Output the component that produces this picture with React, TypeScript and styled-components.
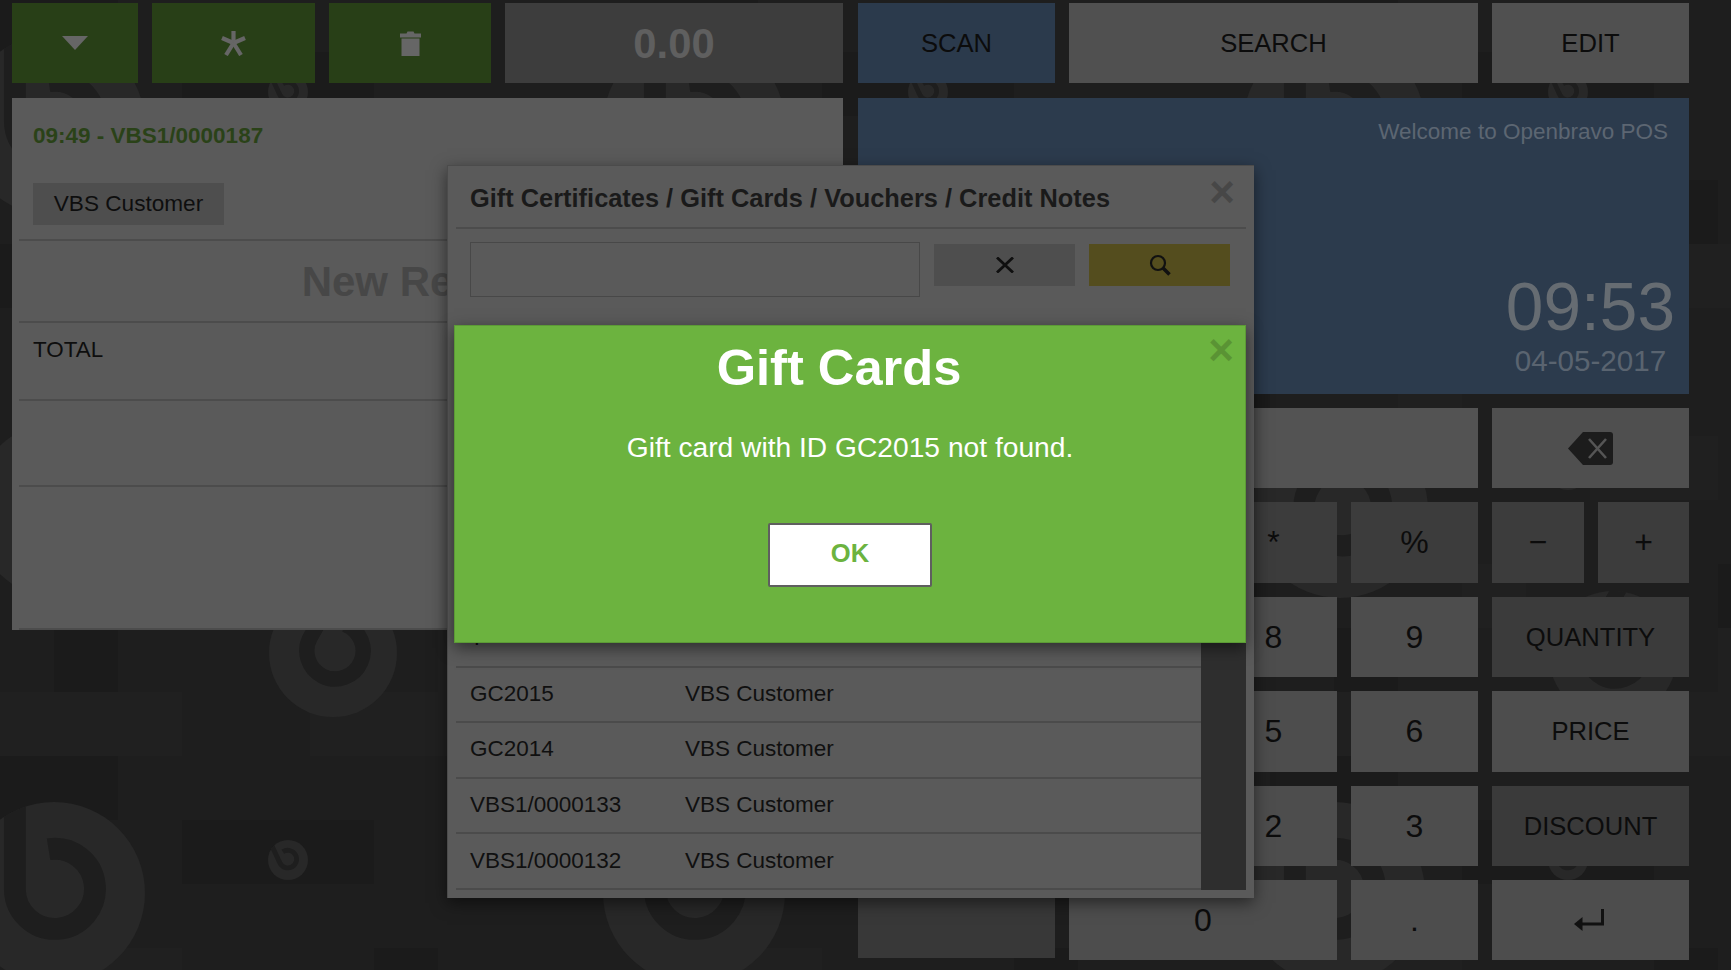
import React from 'react';
import styled, { createGlobalStyle } from 'styled-components';

const GlobalStyle = createGlobalStyle`
  html, body {
    margin: 0;
    padding: 0;
    background: #1e1e1e;
    font-family: "Liberation Sans", Arial, sans-serif;
    overflow: hidden;
  }
`;

const Screen = styled.div`
  position: relative;
  width: 1731px;
  height: 970px;
  overflow: hidden;
`;

const BackdropSvg = styled.svg`
  position: absolute;
  left: 0;
  top: 0;
`;

const Main = styled.div`
  position: relative;
  display: grid;
  grid-template-columns: 831px 831px;
  column-gap: 15px;
  padding: 3px 0 0 12px;
`;

const Column = styled.div`
  display: flex;
  flex-direction: column;
`;

const TopRow = styled.div`
  display: flex;
  gap: 14px;
  height: 80px;
  margin-bottom: 15px;
`;

const TopButton = styled.div<{ $width: number; $bg: string }>`
  width: ${(p) => p.$width}px;
  background: ${(p) => p.$bg};
  display: flex;
  align-items: center;
  justify-content: center;
  color: #0c0c0c;
  font-size: 25.6px;
`;

const Amount = styled(TopButton)`
  box-sizing: border-box;
  padding-top: 2px;
  color: #5f5f5f;
  font-size: 41.8px;
  font-weight: bold;
`;

const ReceiptPanel = styled.div`
  height: 532px;
  background: #5a5a5a;
  padding-left: 7px;
  box-sizing: border-box;
  display: flex;
  flex-direction: column;
`;

const ReceiptTitle = styled.div`
  padding: 25px 0 0 14px;
  height: 62px;
  box-sizing: border-box;
  color: #2a4218;
  font-size: 22.5px;
  font-weight: bold;
  line-height: 26px;
`;

const CustomerRow = styled.div`
  height: 81px;
  padding: 23px 0 0 14px;
  box-sizing: border-box;
  border-bottom: 2px solid #4c4c4c;
`;

const CustomerButton = styled.div`
  display: inline-flex;
  align-items: center;
  justify-content: center;
  width: 191px;
  height: 42px;
  background: #4e4e4e;
  color: #0e0e0e;
  font-size: 22.6px;
`;

const EmptyLabel = styled.div`
  height: 82px;
  box-sizing: border-box;
  border-bottom: 2px solid #4c4c4c;
  display: flex;
  align-items: center;
  justify-content: center;
  padding: 2px 9px 0 0;
  color: #474747;
  font-size: 42px;
  font-weight: bold;
`;

const ReceiptLine = styled.div<{ $height: number }>`
  height: ${(p) => p.$height}px;
  box-sizing: border-box;
  border-bottom: 2px solid #4c4c4c;
  padding: 14px 0 0 14px;
  color: #0e0e0e;
  font-size: 22.4px;
  line-height: 26px;
`;

const ReceiptFoot = styled.div`
  flex: 1;
  border-bottom: 2px solid #4c4c4c;
`;

const InfoPanel = styled.div`
  height: 296px;
  margin-bottom: 14px;
  background: #2c3b4d;
  box-sizing: border-box;
  padding: 22px 21px 0 0;
  display: flex;
  flex-direction: column;
  align-items: flex-end;
`;

const Welcome = styled.div`
  color: #5c6672;
  font-size: 22.5px;
  line-height: 24px;
`;

const ClockBox = styled.div`
  margin-top: 130px;
  margin-right: -7px;
  display: flex;
  flex-direction: column;
  align-items: center;
`;

const Clock = styled.div`
  color: #666c72;
  font-size: 67.6px;
  line-height: 66px;
`;

const DateLabel = styled.div`
  margin-top: 4px;
  color: #5a6470;
  font-size: 29.6px;
  line-height: 34px;
`;

const Keypad = styled.div`
  display: grid;
  grid-template-columns: 197px 127px 127px 127px 197px;
  grid-template-rows: 80px 81px 80px 81px 80px 80px;
  gap: 14px;
`;

const Key = styled.div<{ $bg?: string; $span?: number; $big?: boolean }>`
  grid-column: span ${(p) => p.$span ?? 1};
  background: ${(p) => p.$bg ?? '#4d4d4d'};
  display: flex;
  align-items: center;
  justify-content: center;
  color: #0c0c0c;
  font-size: ${(p) => (p.$big ? 32 : 25.6)}px;
`;

const SplitKey = styled.div`
  display: flex;
  gap: 14px;
`;

const HalfKey = styled(Key)<{ $width: number }>`
  width: ${(p) => p.$width}px;
  flex: none;
`;

const BottomBlank = styled(Key)`
  margin-bottom: 2px;
`;

const EnterKey = styled(Key)`
  padding-right: 4px;
`;

const Dialog = styled.div`
  position: absolute;
  left: 447px;
  top: 165px;
  width: 807px;
  height: 733px;
  box-sizing: border-box;
  padding: 0 8px;
  background: #5a5a5a;
  border-top: 1px solid #4b4b4b;
  border-left: 1px solid #4b4b4b;
  box-shadow: 0 5px 15px rgba(0, 0, 0, 0.5);
  display: flex;
  flex-direction: column;
`;

const DialogHeader = styled.div`
  height: 63px;
  box-sizing: border-box;
  border-bottom: 2px solid #4c4c4c;
  padding: 17px 0 0 14px;
  color: #1a1a1a;
  font-size: 25.4px;
  font-weight: bold;
  line-height: 30px;
`;

const CloseMark = styled.div<{ $color: string; $top: number; $right: number }>`
  position: absolute;
  right: ${(p) => p.$right}px;
  top: ${(p) => p.$top}px;
  color: ${(p) => p.$color};
  font-size: 44px;
  font-weight: bold;
  line-height: 36px;
`;

const SearchRow = styled.div`
  display: flex;
  align-items: flex-start;
  padding: 13px 0 0 14px;
  height: 316px;
  box-sizing: border-box;
`;

const SearchInput = styled.div`
  width: 450px;
  height: 55px;
  box-sizing: border-box;
  border: 1px solid #484848;
  margin-right: 14px;
`;

const SearchButton = styled.div<{ $bg: string }>`
  width: 141px;
  height: 42px;
  margin: 2px 14px 0 0;
  background: ${(p) => p.$bg};
  display: flex;
  align-items: center;
  justify-content: center;
`;

const ListArea = styled.div`
  display: flex;
  height: 278px;
  margin-top: 67px;
`;

const CardList = styled.div`
  flex: 1;
`;

const CardRow = styled.div<{ $height: number }>`
  height: ${(p) => p.$height}px;
  box-sizing: border-box;
  border-bottom: 2px solid #4b4b4b;
  display: flex;
  align-items: center;
  padding: 0 0 2px 14px;
  color: #101010;
  font-size: 22.5px;

  &:last-child {
    padding-bottom: 0;
  }
`;

const CardId = styled.div`
  width: 215px;
`;

const ScrollTrack = styled.div`
  width: 45px;
  margin-top: -62px;
  background: #2e2e2e;
`;

const Alert = styled.div`
  position: absolute;
  left: 454px;
  top: 325px;
  width: 792px;
  height: 318px;
  box-sizing: border-box;
  background: #6cb33f;
  border: 1px solid #5c9a36;
  box-shadow: 0 5px 15px rgba(0, 0, 0, 0.5);
  display: flex;
  flex-direction: column;
  align-items: center;
  color: #fff;
`;

const AlertTitle = styled.div`
  margin: 15px 0 0 -22px;
  font-size: 50.6px;
  font-weight: bold;
  line-height: 54px;
`;

const AlertBody = styled.div`
  margin-top: 31px;
  font-size: 28.2px;
  line-height: 42px;
`;

const OkButton = styled.div`
  margin-top: 55px;
  width: 164px;
  height: 64px;
  box-sizing: border-box;
  background: #fff;
  border: 2px solid #5f5f5f;
  border-radius: 2px;
  display: flex;
  align-items: center;
  justify-content: center;
  padding-bottom: 3px;
  color: #6cb33f;
  font-size: 25.6px;
  font-weight: bold;
`;

const BACK_TILES = [
  'dd........',
  '...ddd....',
  '..........',
  '.ll...d...',
  'd.....ll..',
  '....dd....',
  '..l.....dd',
  '.....ll...',
  'dd........',
  '...l...d..',
  '.d.....l..',
  'lll..lllll',
];

const LOGOS: Array<[number, number, number, number]> = [
  [54, 125, 91, 0], [694, 125, 91, 0], [1334, 125, 91, 0],
  [54, 893, 91, 0], [694, 893, 91, 0], [1334, 893, 91, 0],
  [60, 510, 88, 30], [700, 510, 88, 30], [1340, 510, 88, 30],
  [333, 653, 64, 30], [973, 653, 64, 30], [1613, 655, 64, 30],
  [288, 92, 20, -25], [928, 92, 20, -25], [1568, 92, 20, -25],
  [288, 470, 20, -25], [928, 470, 20, -25], [1568, 470, 20, -25],
  [288, 860, 20, -25], [928, 860, 20, -25], [1568, 860, 20, -25],
];

const Backdrop = (): JSX.Element => {
  const tiles: JSX.Element[] = [];
  for (let j = 0; j < 16; j += 1) {
    for (let i = 0; i < 29; i += 1) {
      const kind = BACK_TILES[j % 12][i % 10];
      if (kind !== '.') {
        tiles.push(
          <rect
            key={`${i}-${j}`}
            x={-10 + i * 64}
            y={-12 + j * 64}
            width={64}
            height={64}
            fill={kind === 'l' ? '#202020' : '#1b1b1b'}
          />,
        );
      }
    }
  }
  return (
    <BackdropSvg width={1731} height={970}>
      <defs>
        <clipPath id="logo-clip">
          <circle cx={50} cy={50} r={50} />
        </clipPath>
      </defs>
      {tiles}
      {LOGOS.map(([cx, cy, r, angle]) => (
        <g key={`${cx}-${cy}`} transform={`translate(${cx - r} ${cy - r}) scale(${r / 50})`}>
          <g clipPath="url(#logo-clip)">
            <g transform={`rotate(${angle} 50 50)`}>
              <circle cx={50} cy={50} r={60} fill="#282828" />
              <path
                d="M47 26 A22 22 0 1 1 28.5 48 V-10"
                fill="none"
                stroke="#1e1e1e"
                strokeWidth={12}
              />
            </g>
          </g>
        </g>
      ))}
    </BackdropSvg>
  );
};

const CaretIcon = () => (
  <svg width="26" height="14" viewBox="0 0 26 14">
    <path d="M0 0H26L13 14Z" fill="#666" />
  </svg>
);

const AsteriskIcon = () => (
  <svg width="25" height="25" viewBox="0 0 25 25">
    <g stroke="#666" strokeWidth="4.2">
      <path d="M12.5 0V12" />
      <path d="M1 7L12.5 12" />
      <path d="M24 7L12.5 12" />
      <path d="M5 24L12.5 12" />
      <path d="M20 24L12.5 12" />
    </g>
  </svg>
);

const TrashIcon = () => (
  <svg width="21" height="25" viewBox="0 0 21 25">
    <path d="M0 2.5H6.5L7.5 0.5H13.5L14.5 2.5H21V6.5H0Z M1.5 7.5H19.5V25H1.5Z" fill="#666" />
  </svg>
);

const BackspaceIcon = () => (
  <svg width="45" height="33" viewBox="0 0 45 33">
    <path d="M15 0H42Q45 0 45 3V30Q45 33 42 33H15L0 16.5Z" fill="#1c1c1c" />
    <path d="M21 7L38 26M38 7L21 26" stroke="#555" strokeWidth="2.6" />
  </svg>
);

const EnterIcon = () => (
  <svg width="30" height="22" viewBox="0 0 30 22">
    <path d="M28.5 0V15H8" fill="none" stroke="#111" strokeWidth="3" />
    <path d="M0 15L8.5 8V22Z" fill="#111" />
  </svg>
);

const CrossIcon = () => (
  <svg width="18" height="16" viewBox="0 0 18 16">
    <path d="M1 0.5L17 15.5M17 0.5L1 15.5" stroke="#0f0f0f" strokeWidth="2.8" />
  </svg>
);

const SearchIcon = () => (
  <svg width="22" height="22" viewBox="0 0 22 22">
    <circle cx="9" cy="9" r="7" fill="none" stroke="#111" strokeWidth="2.2" />
    <path d="M14 14L20.5 20.5" stroke="#111" strokeWidth="3.6" />
  </svg>
);

const App = (): JSX.Element => (
  <Screen>
    <GlobalStyle />
    <Backdrop />
    <Main>
      <Column>
        <TopRow>
          <TopButton $width={126} $bg="#283f17"><CaretIcon /></TopButton>
          <TopButton $width={163} $bg="#283f17"><AsteriskIcon /></TopButton>
          <TopButton $width={162} $bg="#283f17"><TrashIcon /></TopButton>
          <Amount $width={338} $bg="#3d3d3d">0.00</Amount>
        </TopRow>
        <ReceiptPanel>
          <ReceiptTitle>09:49 - VBS1/0000187</ReceiptTitle>
          <CustomerRow>
            <CustomerButton>VBS Customer</CustomerButton>
          </CustomerRow>
          <EmptyLabel>New Receipt</EmptyLabel>
          <ReceiptLine $height={78}>TOTAL</ReceiptLine>
          <ReceiptLine $height={86} />
          <ReceiptFoot />
        </ReceiptPanel>
      </Column>
      <Column>
        <TopRow>
          <TopButton $width={197} $bg="#2b3a4c">SCAN</TopButton>
          <TopButton $width={409} $bg="#505050">SEARCH</TopButton>
          <TopButton $width={197} $bg="#505050">EDIT</TopButton>
        </TopRow>
        <InfoPanel>
          <Welcome>Welcome to Openbravo POS</Welcome>
          <ClockBox>
            <Clock>09:53</Clock>
            <DateLabel>04-05-2017</DateLabel>
          </ClockBox>
        </InfoPanel>
        <Keypad>
          <Key $bg="#3a3a3a" />
          <Key $span={3} $bg="#535353" />
          <Key $bg="#4f4f4f"><BackspaceIcon /></Key>

          <Key $bg="#3a3a3a" />
          <Key $big $bg="#3c3c3c">/</Key>
          <Key $big $bg="#3c3c3c">*</Key>
          <Key $big $bg="#3c3c3c">%</Key>
          <SplitKey>
            <HalfKey $big $width={92} $bg="#3c3c3c">−</HalfKey>
            <HalfKey $big $width={91} $bg="#3c3c3c">+</HalfKey>
          </SplitKey>

          <Key $bg="#3a3a3a" />
          <Key $big>7</Key>
          <Key $big>8</Key>
          <Key $big>9</Key>
          <Key $bg="#3b3b3b">QUANTITY</Key>

          <Key $bg="#3a3a3a" />
          <Key $big>4</Key>
          <Key $big>5</Key>
          <Key $big>6</Key>
          <Key>PRICE</Key>

          <Key $bg="#3a3a3a" />
          <Key $big>1</Key>
          <Key $big>2</Key>
          <Key $big>3</Key>
          <Key $bg="#3a3a3a">DISCOUNT</Key>

          <BottomBlank $bg="#383838" />
          <Key $big $span={2}>0</Key>
          <Key $big>.</Key>
          <EnterKey><EnterIcon /></EnterKey>
        </Keypad>
      </Column>
    </Main>

    <Dialog>
      <DialogHeader>Gift Certificates / Gift Cards / Vouchers / Credit Notes</DialogHeader>
      <CloseMark $color="#474747" $top={8} $right={19}>×</CloseMark>
      <SearchRow>
        <SearchInput />
        <SearchButton $bg="#4e4e4e"><CrossIcon /></SearchButton>
        <SearchButton $bg="#544d1e"><SearchIcon /></SearchButton>
      </SearchRow>
      <ListArea>
        <CardList>
          <CardRow $height={56}>T</CardRow>
          <CardRow $height={55}><CardId>GC2015</CardId>VBS Customer</CardRow>
          <CardRow $height={56}><CardId>GC2014</CardId>VBS Customer</CardRow>
          <CardRow $height={55}><CardId>VBS1/0000133</CardId>VBS Customer</CardRow>
          <CardRow $height={56}><CardId>VBS1/0000132</CardId>VBS Customer</CardRow>
        </CardList>
        <ScrollTrack />
      </ListArea>
    </Dialog>

    <Alert>
      <CloseMark $color="#5a9334" $top={6} $right={11}>×</CloseMark>
      <AlertTitle>Gift Cards</AlertTitle>
      <AlertBody>Gift card with ID GC2015 not found.</AlertBody>
      <OkButton>OK</OkButton>
    </Alert>
  </Screen>
);

export default App;
